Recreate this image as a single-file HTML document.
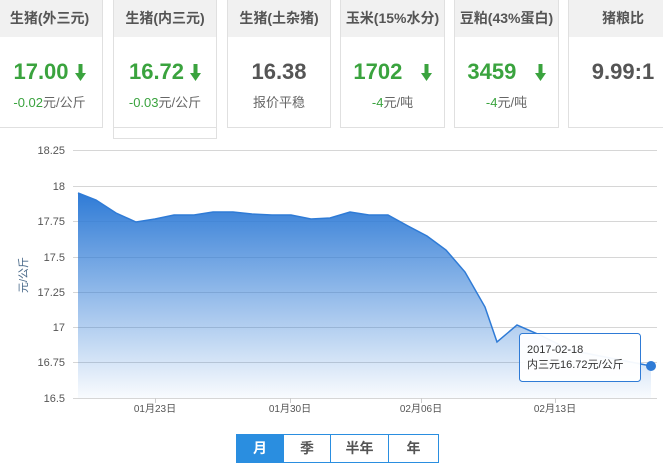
<!DOCTYPE html>
<html><head><meta charset="utf-8"><style>
body{margin:0;width:663px;height:465px;background:#fff;overflow:hidden;position:relative;font-family:"Liberation Sans","Noto Sans CJK SC",sans-serif}
.card{position:absolute;top:0;height:128px;border:1px solid #e0e0e0;border-top:none;background:#fff;box-sizing:border-box;text-align:center}
.hd{height:37px;background:#f1f1f1;font-size:14px;font-weight:bold;color:#555;line-height:37px}
.v{font-size:22px;font-weight:bold;margin-top:21px;height:28px;line-height:28px}
.g{color:#3aa33e}.d{color:#555}
.s{font-size:13px;color:#666;margin-top:6px}
.s b{font-weight:normal;color:#3aa33e}
.ar{display:inline-block;margin-left:6px;vertical-align:-2px}
.sel{position:absolute;left:113px;top:0;width:104px;height:139px;border:1px solid #e0e0e0;border-top:none;box-sizing:border-box}
.btn{position:absolute;top:434px;height:29px;border:1px solid #2a8ee0;box-sizing:border-box;font-size:14px;font-weight:bold;color:#555;text-align:center;line-height:27px}
</style></head><body>
<div class="sel"></div>
<div class="card" style="left:-4px;width:107px"><div class="hd">生猪(外三元)</div><div class="v g">17.00<svg class="ar" width="11" height="17" viewBox="0 0 11 17"><path d="M3.5,0h4v9h3.5L5.5,17L0,9h3.5z" fill="#3aa33e"/></svg></div><div class="s"><b>-0.02</b>元/公斤</div></div>
<div class="card" style="left:113px;width:104px"><div class="hd">生猪(内三元)</div><div class="v g">16.72<svg class="ar" width="11" height="17" viewBox="0 0 11 17"><path d="M3.5,0h4v9h3.5L5.5,17L0,9h3.5z" fill="#3aa33e"/></svg></div><div class="s"><b>-0.03</b>元/公斤</div></div>
<div class="card" style="left:227px;width:104px"><div class="hd">生猪(土杂猪)</div><div class="v d">16.38</div><div class="s">报价平稳</div></div>
<div class="card" style="left:340px;width:105px"><div class="hd">玉米(15%水分)</div><div class="v g">1702 &nbsp;<svg class="ar" width="11" height="17" viewBox="0 0 11 17"><path d="M3.5,0h4v9h3.5L5.5,17L0,9h3.5z" fill="#3aa33e"/></svg></div><div class="s"><b>-4</b>元/吨</div></div>
<div class="card" style="left:454px;width:105px"><div class="hd">豆粕(43%蛋白)</div><div class="v g">3459 &nbsp;<svg class="ar" width="11" height="17" viewBox="0 0 11 17"><path d="M3.5,0h4v9h3.5L5.5,17L0,9h3.5z" fill="#3aa33e"/></svg></div><div class="s"><b>-4</b>元/吨</div></div>
<div class="card" style="left:568px;width:110px"><div class="hd">猪粮比</div><div class="v d">9.99:1</div></div>
<svg style="position:absolute;left:0;top:0" width="663" height="465">
<defs><linearGradient id="gr" x1="0" y1="0" x2="0" y2="1"><stop offset="0" stop-color="#2f7bd6"/><stop offset="1" stop-color="#2f7bd6" stop-opacity="0.03"/></linearGradient></defs>
<g stroke="#d6d6d6" stroke-width="1"><line x1="73" y1="150.5" x2="657" y2="150.5"/><line x1="73" y1="186.5" x2="657" y2="186.5"/><line x1="73" y1="221.5" x2="657" y2="221.5"/><line x1="73" y1="257.5" x2="657" y2="257.5"/><line x1="73" y1="292.5" x2="657" y2="292.5"/><line x1="73" y1="327.5" x2="657" y2="327.5"/><line x1="73" y1="362.5" x2="657" y2="362.5"/><line x1="73" y1="398.5" x2="657" y2="398.5"/></g>
<path d="M78,193 L96,200 L116,213 L136,222 L155,219 L174,215 L194,215 L213,212 L233,212 L252,214 L272,215 L291,215 L311,219 L330,218 L350,212 L369,215 L388,215 L408,226 L427,236 L446,250 L465,272 L485,307 L497,342 L517,325 L540,335 L570,350 L600,356 L651,366 L651,398 L78,398Z" fill="url(#gr)"/>
<path d="M78,193 L96,200 L116,213 L136,222 L155,219 L174,215 L194,215 L213,212 L233,212 L252,214 L272,215 L291,215 L311,219 L330,218 L350,212 L369,215 L388,215 L408,226 L427,236 L446,250 L465,272 L485,307 L497,342 L517,325 L540,335 L570,350 L600,356 L651,366" fill="none" stroke="#2f7bd6" stroke-width="1.5"/>
<circle cx="651" cy="366" r="5" fill="#2f7bd6"/>
<g font-size="11" fill="#555" text-anchor="end"><text x="65" y="154">18.25</text><text x="65" y="190">18</text><text x="65" y="225">17.75</text><text x="65" y="261">17.5</text><text x="65" y="296">17.25</text><text x="65" y="331">17</text><text x="65" y="366">16.75</text><text x="65" y="402">16.5</text></g>
<text transform="translate(27,275) rotate(-90)" font-size="11" fill="#4a6a8a" text-anchor="middle">元/公斤</text>
<g stroke="#ccc"><line x1="155.5" y1="398" x2="155.5" y2="403"/><line x1="290.5" y1="398" x2="290.5" y2="403"/><line x1="421.5" y1="398" x2="421.5" y2="403"/><line x1="555.5" y1="398" x2="555.5" y2="403"/></g>
<g font-size="10" fill="#555" text-anchor="middle"><text x="155" y="412">01月23日</text><text x="290" y="412">01月30日</text><text x="421" y="412">02月06日</text><text x="555" y="412">02月13日</text></g>
<rect x="519.5" y="333.5" width="121" height="48" rx="3" fill="#fff" fill-opacity="0.95" stroke="#2f7bd6"/>
<text x="527" y="353" font-size="11" fill="#333">2017-02-18</text>
<text x="527" y="368" font-size="11" fill="#333">内三元16.72元/公斤</text>
</svg>
<div class="btn" style="left:236px;width:48px;background:#2a8ee0;color:#fff">月</div>
<div class="btn" style="left:283px;width:48px">季</div>
<div class="btn" style="left:330px;width:59px">半年</div>
<div class="btn" style="left:388px;width:51px">年</div>
</body></html>
